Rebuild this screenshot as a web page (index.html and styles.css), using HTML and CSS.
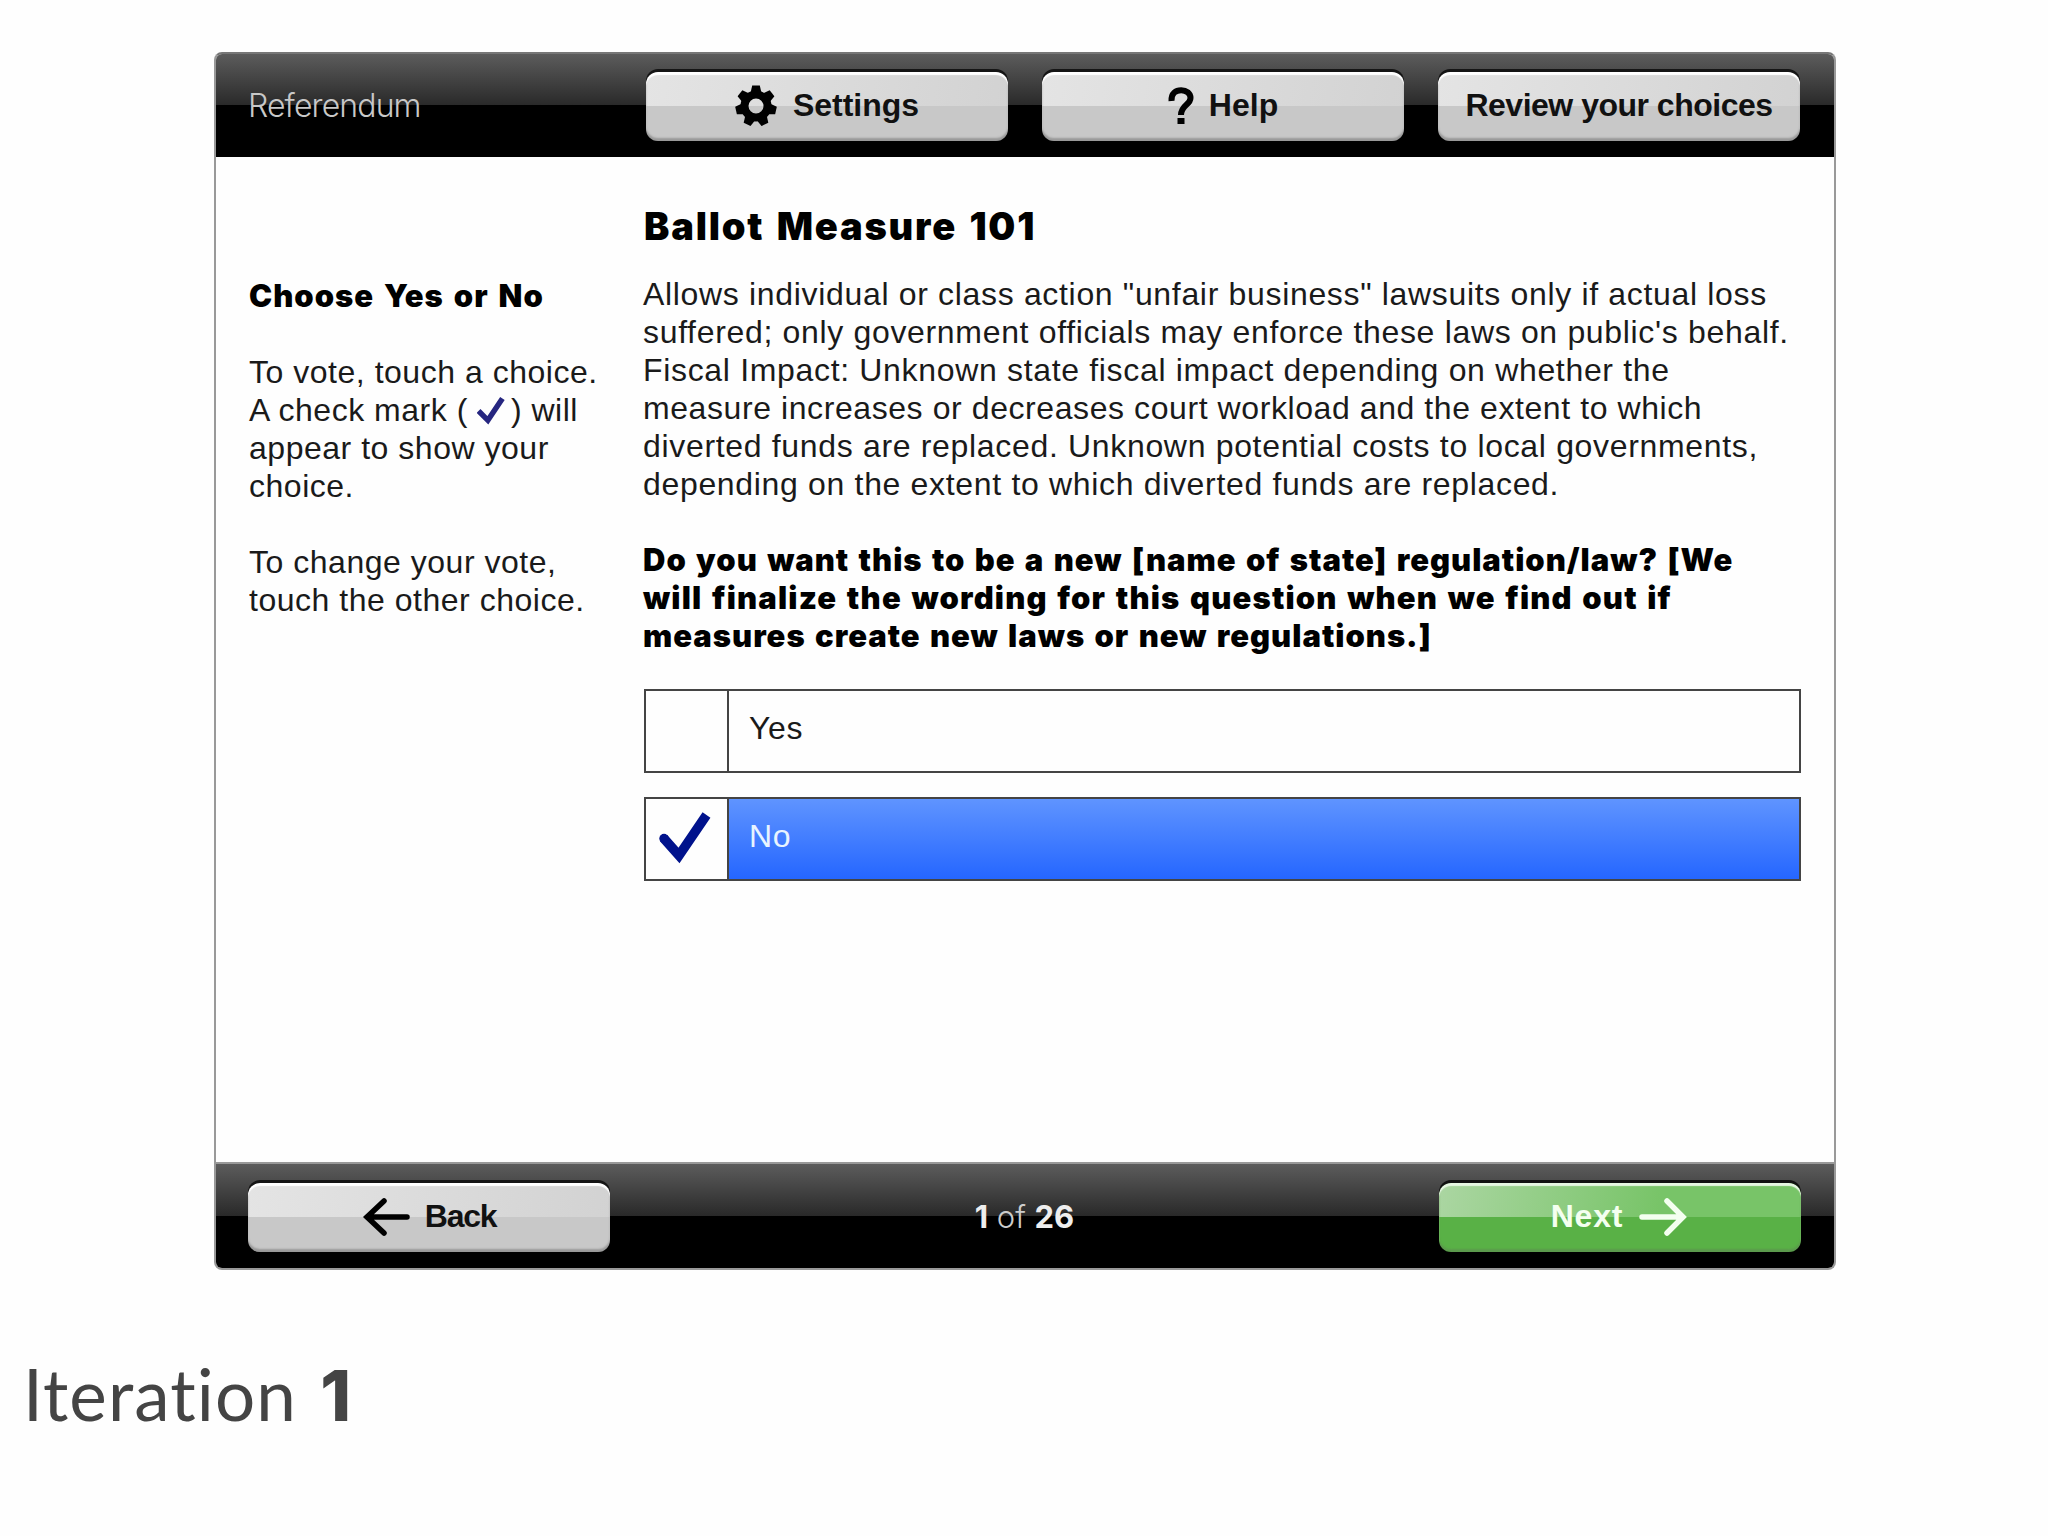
FILE: index.html
```html
<!DOCTYPE html>
<html lang="en">
<head>
    <meta charset="UTF-8">
    <meta name="viewport" content="width=device-width, initial-scale=1.0">
    <title>Ballot Measure 101</title>
    <link rel="stylesheet" href="styles.css">
</head>
<body>
    <div class="ballot">
        <header class="bar top-bar">
            <span class="section-name">Referendum</span>
            <button class="btn">
                <svg class="gear" width="42" height="42" viewBox="-21 -21 42 42">
                    <circle r="11.5" fill="none" stroke="#000" stroke-width="8"/>
                    <g fill="#000">
                        <path id="tooth" d="M-5.5 -13 L-3.8 -20.5 H3.8 L5.5 -13 Z"/>
                        <use href="#tooth" transform="rotate(51.43)"/>
                        <use href="#tooth" transform="rotate(102.86)"/>
                        <use href="#tooth" transform="rotate(154.29)"/>
                        <use href="#tooth" transform="rotate(205.71)"/>
                        <use href="#tooth" transform="rotate(257.14)"/>
                        <use href="#tooth" transform="rotate(308.57)"/>
                    </g>
                </svg>
                <span class="label">Settings</span>
            </button>
            <button class="btn">
                <svg class="question-icon" width="26" height="38" viewBox="0 0 26 38">
                    <path d="M3.5 14 C3 6 8 3.2 13.2 3.2 C18.5 3.2 22.5 6.5 22.5 11 C22.5 18 13 18 13 28" fill="none" stroke="#000" stroke-width="6"/>
                    <rect x="9.5" y="31" width="7" height="6" fill="#000"/>
                </svg>
                <span class="label">Help</span>
            </button>
            <button class="btn">
                <span class="label label-review">Review your choices</span>
            </button>
        </header>

        <main class="content">
            <aside class="instructions">
                <h2>Choose Yes or No</h2>
                <p>
                    To vote, touch a choice.<br>
                    A check mark (<svg class="small-check" width="28" height="28" viewBox="0 0 54 54"><path d="M3 27 L21 45 L49 3" fill="none" stroke="#262680" stroke-width="10.5"/></svg>) will<br>
                    appear to show your<br>
                    choice.
                </p>
                <p>
                    To change your vote,<br>
                    touch the other choice.
                </p>
            </aside>

            <section class="measure">
                <h1>Ballot Measure 101</h1>
                <p class="summary">
                    Allows individual or class action "unfair business" lawsuits only if actual loss<br>
                    suffered; only government officials may enforce these laws on public's behalf.<br>
                    Fiscal Impact: Unknown state fiscal impact depending on whether the<br>
                    <span class="tight">measure increases or decreases court workload and the extent to which</span><br>
                    diverted funds are replaced. Unknown potential costs to local governments,<br>
                    depending on the extent to which diverted funds are replaced.
                </p>
                <p class="question">
                    Do you want this to be a new [name of state] regulation/law? [We<br>
                    <span class="wide">will finalize the wording for this question when we find out if</span><br>
                    measures create new laws or new regulations.]
                </p>
                <div class="choice">
                    <div class="check-box"></div>
                    <div class="choice-name">Yes</div>
                </div>
                <div class="choice selected">
                    <div class="check-box">
                        <svg width="56" height="56" viewBox="0 0 56 56">
                            <path d="M4.5 27 L20 44.5 L47.5 4" fill="none" stroke="#00128c" stroke-width="9.5"/>
                            <circle cx="5" cy="27.5" r="4.7" fill="#00128c"/>
                        </svg>
                    </div>
                    <div class="choice-name">No</div>
                </div>
            </section>
        </main>

        <footer class="bar bottom-bar">
            <button class="btn">
                <svg class="arrow" width="48" height="40" viewBox="0 0 48 40">
                    <path d="M45 20 H5 M22 4 L5 20 L22 36" fill="none" stroke="#000" stroke-width="5.5" stroke-linecap="round"/>
                </svg>
                <span class="label label-back">Back</span>
            </button>
            <div class="page-count"><b>1</b> of <b>26</b></div>
            <button class="btn btn-next">
                <span class="label label-next">Next</span>
                <svg class="arrow" width="48" height="40" viewBox="0 0 48 40">
                    <path d="M3 20 H43 M28 4 L44 20 L28 36" fill="none" stroke="#f4fff0" stroke-width="5.5" stroke-linecap="round"/>
                </svg>
            </button>
        </footer>
    </div>
    <div class="caption">Iteration <b>1</b></div>
</body>
</html>
```
FILE: styles.css
```css
body {
    margin: 0;
    background-color: #fefefe;
    font-family: "Liberation Sans", Arial, sans-serif;
    font-size: 32px;
    line-height: 38px;
    color: #1a1a1a;
    overflow: hidden;
}
.ballot {
    box-sizing: border-box;
    width: 1622px;
    height: 1218px;
    margin: 52px 0 0 214px;
    border: 2px solid #999;
    border-top-color: #777;
    border-radius: 8px;
    background: #fefefe;
    overflow: hidden;
    display: flex;
    flex-direction: column;
}
.bar {
    box-sizing: border-box;
    flex: none;
    height: 103px;
    padding: 1px 34px 0 32px;
    display: flex;
    align-items: center;
    background: linear-gradient(#5c5c5c 0, #292929 50%, #000 50%, #000 100%);
}
.top-bar {
    gap: 34px;
}
.section-name {
    flex: 1;
    font-family: Inter, sans-serif;
    font-weight: 300;
    font-size: 32px;
    letter-spacing: -0.9px;
    color: #c8c8c8;
}
.btn {
    box-sizing: border-box;
    flex: none;
    width: 362px;
    height: 69px;
    margin: 0;
    padding: 0 0 1px;
    border: none;
    border-radius: 12px;
    display: flex;
    align-items: center;
    justify-content: center;
    background: linear-gradient(#fff0 0, #fff0 50%, #c8c8c8 50%, #c8c8c8 100%), linear-gradient(100deg, #e4e4e4, #d2d2d2);
    box-shadow: 0 -3px 0 #151515, inset 0 3px 1px #fff, inset 0 -3px 2px #999;
    font-family: "Liberation Sans", Arial, sans-serif;
    font-size: 32px;
    font-weight: bold;
    color: #111;
}
.btn-next {
    color: #f4fff0;
    background: linear-gradient(#fff0 0, #fff0 50%, #59b146 50%, #59b146 100%), linear-gradient(100deg, #abd6a2, #78c468 60%);
    box-shadow: 0 -3px 0 #111, inset 0 3px 1px #e6f7e2, inset 0 -3px 2px #5c9a4d;
}
.label-review {
    letter-spacing: -0.5px;
}
.label-back {
    letter-spacing: -1.3px;
}
.label-next {
    letter-spacing: 0.8px;
}
.gear {
    margin-right: 16px;
}
.question-icon {
    margin-right: 15px;
}
.content {
    flex: 1;
    display: flex;
    padding: 0 32px 0 33px;
}
.instructions {
    width: 395px;
    padding-top: 120px;
    white-space: nowrap;
}
.instructions h2 {
    margin: 0 0 38px;
    font-family: Inter, sans-serif;
    font-size: 31px;
    font-weight: 900;
    line-height: 38px;
    letter-spacing: 1px;
    word-spacing: 2.8px;
    color: #000;
}
.instructions p {
    margin: 0 0 38px;
    letter-spacing: 0.52px;
}
.small-check {
    margin: 0 6px 0 9px;
    vertical-align: -4px;
}
.measure {
    width: 1157px;
    padding-top: 44px;
    white-space: nowrap;
}
.measure h1 {
    margin: 0 0 24px;
    font-family: Inter, sans-serif;
    font-size: 38px;
    font-weight: 900;
    line-height: 50px;
    letter-spacing: 1.8px;
    word-spacing: 3px;
    color: #000;
}
.summary {
    margin: 0 0 38px -1px;
    letter-spacing: 0.67px;
}
.tight {
    letter-spacing: 0.58px;
}
.question {
    margin: 0 0 34px -1px;
    font-family: Inter, sans-serif;
    font-size: 31px;
    font-weight: 900;
    letter-spacing: 0.99px;
    word-spacing: 2.2px;
    color: #000;
}
.wide {
    letter-spacing: 1.17px;
}
.choice {
    box-sizing: border-box;
    display: flex;
    height: 84px;
    margin-bottom: 24px;
    border: 2px solid #444;
}
.check-box {
    box-sizing: border-box;
    width: 83px;
    border-right: 2px solid #444;
    display: flex;
    align-items: center;
    justify-content: center;
}
.choice-name {
    flex: 1;
    padding: 18px 20px;
    letter-spacing: 0.6px;
}
.selected .choice-name {
    color: #e8f4ff;
    background: linear-gradient(#5f94ff, #2566ff);
}
.bottom-bar {
    justify-content: space-between;
    height: 106px;
    padding: 2px 33px 0 32px;
    border-top: 2px solid #999;
}
.page-count {
    font-family: Inter, sans-serif;
    font-weight: 300;
    font-size: 31px;
    color: #ccc;
}
.page-count b {
    font-weight: 700;
    color: #eee;
}
.arrow {
    margin-right: 15px;
}
.btn-next .arrow {
    margin: 0 2px 0 16px;
}
.caption {
    margin: 86px 0 0 23px;
    font-family: Lato, sans-serif;
    font-size: 71px;
    line-height: 76px;
    letter-spacing: 1.1px;
    font-variant-ligatures: none;
    color: #444;
}
.caption b {
    margin-left: 4px;
    font-family: Inter, sans-serif;
    font-size: 70px;
    font-weight: 800;
}
```
